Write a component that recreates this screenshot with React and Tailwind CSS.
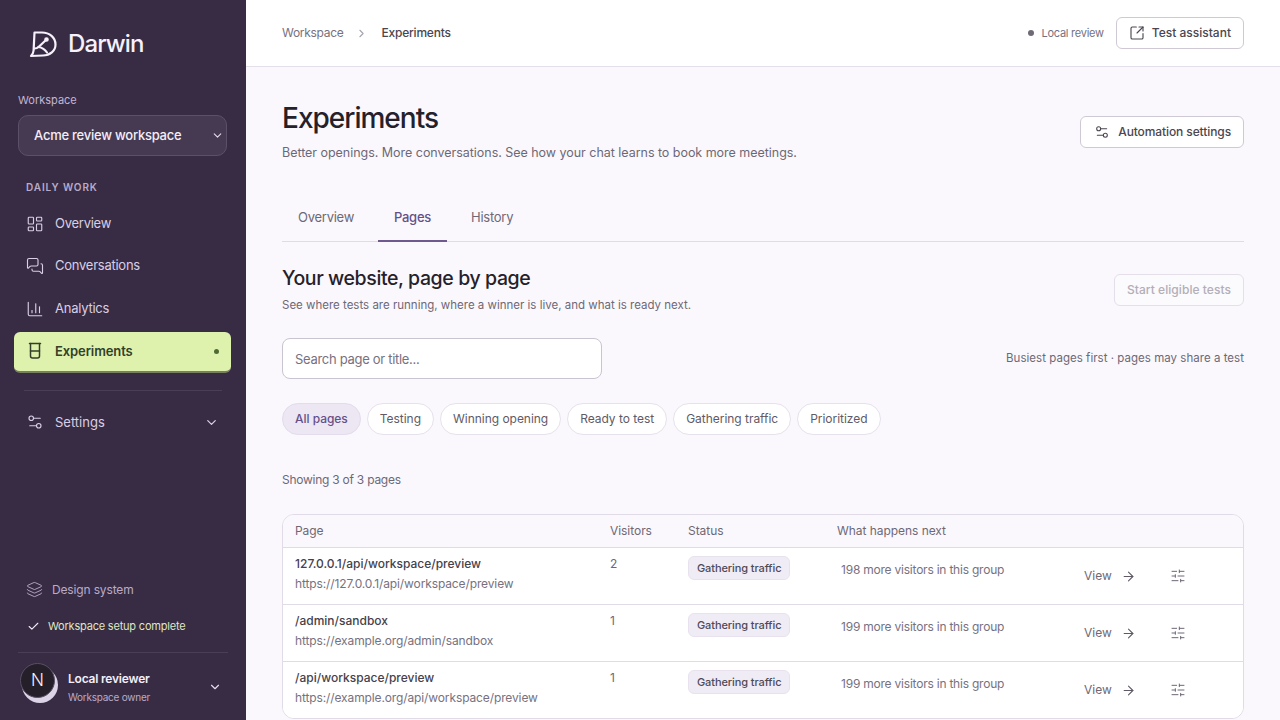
import React from "react";
import {
  ArrowRight,
  Check,
  ChevronDown,
  ChevronRight,
  ChartColumn,
  LayoutDashboard,
  Layers,
  MessagesSquare,
  Settings2,
  SlidersHorizontal,
  SquareArrowOutUpRight,
} from "lucide-react";

// Logo: speech bubble shaped like a D, with a little branch inside
const Logo = () => (
  <svg width="28" height="28" viewBox="0 0 28 28" fill="none" stroke="#f6f1fb" strokeWidth="2.2" strokeLinecap="round" strokeLinejoin="round">
    <path d="M2 26C3.6 24.5 4.4 22.5 4.6 20.5L5.5 2.5H13C20.5 2.5 26.5 7.5 26.5 14.5C26.5 21 21 25.5 14 25.5Z" />
    <path d="M5.5 18.5C7 18.5 8.5 18 9.5 17L17 10" />
    <path d="M9.5 17C12.5 17.5 16 19.5 18 22.5" />
    <circle cx="17.5" cy="9.5" r="1.2" fill="#f6f1fb" />
  </svg>
);

// Experiments icon: a glass half filled
const GlassIcon = () => (
  <svg width="18" height="18" viewBox="0 0 18 18" fill="none" stroke="#33402a" strokeWidth="1.5" strokeLinecap="round" strokeLinejoin="round">
    <path d="M3.5 1.5h11" />
    <path d="M4.5 1.5v12.5a2 2 0 0 0 2 2h5a2 2 0 0 0 2-2V1.5" />
    <path d="M4.5 9h9" />
  </svg>
);

const navItems = [
  { label: "Overview", icon: LayoutDashboard },
  { label: "Conversations", icon: MessagesSquare },
  { label: "Analytics", icon: ChartColumn },
];

const filters = ["Testing", "Winning opening", "Ready to test", "Gathering traffic", "Prioritized"];

const rows = [
  { title: "127.0.0.1/api/workspace/preview", url: "https://127.0.0.1/api/workspace/preview", visitors: 2, next: "198 more visitors in this group" },
  { title: "/admin/sandbox", url: "https://example.org/admin/sandbox", visitors: 1, next: "199 more visitors in this group" },
  { title: "/api/workspace/preview", url: "https://example.org/api/workspace/preview", visitors: 1, next: "199 more visitors in this group" },
];

const Sidebar = () => (
  <aside className="w-[246px] shrink-0 h-full bg-[#382c45] flex flex-col">
    <div className="flex items-center gap-[11px] pl-[29px] h-[87px]">
      <Logo />
      <span className="text-[24px] leading-[30px] font-medium tracking-[-0.9px] text-[#f6f1fb]">Darwin</span>
    </div>

    <div className="px-[18px] mt-[6px]">
      <p className="text-[11px] leading-[14px] text-[#c3b6d0]">Workspace</p>
      <button className="mt-[8px] w-[209px] h-[41px] pl-[15px] pr-[2px] flex items-center justify-between rounded-[10px] bg-[#463a53] border border-[#5c4f6a] text-[13px] tracking-[-0.24px] font-medium text-[#f3eef8]">
        Acme review workspace
        <ChevronDown size={13} className="text-[#e4dcec]" />
      </button>
    </div>

    <p className="mt-[24px] pl-[26px] text-[10px] leading-[14px] font-semibold tracking-[0.9px] text-[#b9abc8]">DAILY WORK</p>

    <nav className="mt-[8.4px] px-[14px] flex flex-col">
      {navItems.map((item) => (
        <a key={item.label} className="h-[42.5px] pl-[12px] flex items-center gap-[11px] text-[13px] tracking-[-0.25px] text-[#d9cfe4]">
          <item.icon size={18} strokeWidth={1.5} className="text-[#d9cfe4]" />
          {item.label}
        </a>
      ))}
      <a className="mt-[2.1px] h-[41px] w-[217px] pl-[12px] pr-[12px] flex items-center gap-[11px] rounded-[6px] bg-[#dff2ad] border-b-2 border-[#77805f] text-[13px] tracking-[-0.1px] font-semibold text-[#33402a]">
        <GlassIcon />
        Experiments
        <span className="ml-auto w-[5px] h-[5px] rounded-full bg-[#4f6b35]" />
      </a>
    </nav>

    <div className="mx-[24px] mt-[17px] h-px bg-[#4a3e57]" />

    <div className="mt-[11.5px] mx-[14px] h-[40px] pl-[12px] pr-[13px] flex items-center gap-[11px] text-[13px] text-[#d9cfe4]">
      <Settings2 size={18} strokeWidth={1.5} className="text-[#d9cfe4]" />
      Settings
      <ChevronDown size={15} className="ml-auto text-[#d9cfe4]" />
    </div>

    <div className="mt-auto">
      <div className="pl-[26px] flex items-center gap-[9px] text-[12px] tracking-[-0.15px] leading-[16px] text-[#b9abc8]">
        <Layers size={17} strokeWidth={1.3} />
        Design system
      </div>
      <div className="mt-[20px] pl-[27px] flex items-center gap-[8px] text-[11px] tracking-[-0.2px] leading-[16px] text-[#dfe6c0]">
        <Check size={13} className="text-[#f0edf4]" />
        Workspace setup complete
      </div>
      <div className="mx-[18px] mt-[18px] h-px bg-[#4a3e57]" />
      <div className="h-[67px] pl-[20px] pr-[24px] flex items-center">
        <div className="relative -mt-[7px] w-[38px] h-[40px] shrink-0">
          <div className="absolute left-[2px] top-[4px] w-[36px] h-[36px] rounded-full bg-[#dcd3e6]" />
          <div className="absolute left-0 top-0 w-[35px] h-[35px] rounded-full bg-[#241f29] border border-[#5a5065] flex items-center justify-center text-[17px] font-light text-[#f4f0f8]">N</div>
        </div>
        <div className="ml-[10px] pt-[1px]">
          <p className="text-[12px] leading-[16px] font-semibold tracking-[-0.2px] text-[#f3eef8]">Local reviewer</p>
          <p className="mt-[3px] text-[10px] leading-[14px] tracking-[-0.25px] text-[#b9abc8]">Workspace owner</p>
        </div>
        <ChevronDown size={14} className="ml-auto text-[#e4dcec]" />
      </div>
    </div>
  </aside>
);

const Topbar = () => (
  <header className="h-[67px] shrink-0 px-[36px] bg-white border-b border-[#e4dfe9] flex items-center">
    <span className="text-[12px] tracking-[-0.3px] text-[#77717f]">Workspace</span>
    <ChevronRight size={13} className="ml-[12px] mr-[13px] text-[#a8a3ae]" />
    <span className="text-[12px] tracking-[-0.2px] font-medium text-[#4a4650]">Experiments</span>
    <span className="ml-auto w-[6px] h-[6px] rounded-full bg-[#6f6a76]" />
    <span className="ml-[7px] text-[11px] tracking-[-0.25px] text-[#77717f]">Local review</span>
    <button className="ml-[12px] h-[32px] px-[12px] flex items-center gap-[7px] rounded-[6px] bg-white border border-[#cfc9d5] text-[12px] font-medium text-[#4a4650]">
      <SquareArrowOutUpRight size={16} strokeWidth={1.7} />
      Test assistant
    </button>
  </header>
);

const PagesTable = () => (
  <div className="mt-[26px] rounded-[12px] border border-[#e0dbe6] overflow-hidden">
    <div className="h-[33px] bg-[#faf8fd] border-b border-[#e0dbe6] grid grid-cols-[315px_78px_149px_1fr] items-center text-[12px] tracking-[-0.05px] text-[#6e6876]">
      <span className="px-[12px]">Page</span>
      <span className="px-[12px]">Visitors</span>
      <span className="px-[12px]">Status</span>
      <span className="px-[12px]">What happens next</span>
    </div>
    {rows.map((row, i) => (
      <div key={row.title} className={`h-[57px] last:h-[56px] bg-white grid grid-cols-[315px_78px_149px_247px_86px_1fr] ${i < rows.length - 1 ? "border-b border-[#e0dbe6]" : ""}`}>
        <div className="px-[12px] pt-[7px]">
          <p className="text-[12px] leading-[18px] font-medium text-[#45414c]">{row.title}</p>
          <p className="mt-[2px] text-[12px] leading-[18px] tracking-[-0.12px] text-[#77717f]">{row.url}</p>
        </div>
        <div className="px-[12px] pt-[7px] text-[12px] leading-[18px] text-[#6e6876]">{row.visitors}</div>
        <div className="px-[12px] pt-[6px]">
          <span className="inline-flex items-center h-[24px] px-[8px] rounded-[6px] bg-[#f0ecf5] border border-[#e7e2ed] text-[11px] tracking-[-0.1px] font-medium text-[#4f4a57]">Gathering traffic</span>
        </div>
        <div className="pl-[16px] pt-[13px] text-[12px] leading-[18px] tracking-[-0.22px] text-[#77717f]">{row.next}</div>
        <div className="pl-[12px] flex items-center gap-[9px] text-[12px] text-[#6e6876]">
          View
          <ArrowRight size={15} strokeWidth={1.7} className="text-[#5f5a66]" />
        </div>
        <div className="pl-[12px] flex items-center">
          <SlidersHorizontal size={16} strokeWidth={1.5} className="text-[#6e6876]" />
        </div>
      </div>
    ))}
  </div>
);

const App = () => (
  <div className="flex h-screen overflow-hidden bg-[#faf8fd] font-['Inter',sans-serif]">
    <Sidebar />
    <main className="flex-1 min-w-0 flex flex-col">
      <Topbar />
      <div className="px-[36px] pt-[34px]">
        <div className="flex items-start justify-between">
          <div>
            <h1 className="text-[28px] leading-[34px] font-medium tracking-[-1px] text-[#25212b]">Experiments</h1>
            <p className="mt-[9px] text-[12.5px] leading-[18px] tracking-[-0.03px] text-[#6e6876]">Better openings. More conversations. See how your chat learns to book more meetings.</p>
          </div>
          <button className="mt-[15px] h-[32px] pl-[13px] pr-[12px] flex items-center gap-[8px] rounded-[6px] bg-white border border-[#cfc9d5] text-[12px] tracking-[-0.1px] font-medium text-[#4a4650]">
            <Settings2 size={16} strokeWidth={1.6} />
            Automation settings
          </button>
        </div>

        <div className="mt-[36px] h-[44px] flex items-stretch border-b border-[#e0dbe6] text-[13px] tracking-[-0.25px] text-[#6e6876]">
          <a className="w-[96px] pl-[16px] pt-[10px]">Overview</a>
          <a className="w-[69px] -mb-px pt-[10px] text-center font-medium text-[#65508a] border-b-2 border-[#6f5a90]">Pages</a>
          <a className="pl-[24px] pt-[10px]">History</a>
        </div>

        <div className="mt-[23px] flex items-start justify-between">
          <div>
            <h2 className="text-[19.5px] leading-[26px] font-medium tracking-[-0.4px] text-[#25212b]">Your website, page by page</h2>
            <p className="mt-[6px] text-[11.5px] leading-[16px] text-[#6e6876]">See where tests are running, where a winner is live, and what is ready next.</p>
          </div>
          <button className="mt-[9px] h-[32px] px-[12px] rounded-[6px] bg-[#fbfafc] border border-[#e4dfe9] text-[12px] tracking-[0.05px] font-medium text-[#b3aeb8]">Start eligible tests</button>
        </div>

        <div className="mt-[25px] flex items-center justify-between">
          <input
            placeholder="Search page or title..."
            className="w-[320px] h-[41px] px-[12px] rounded-[8px] bg-white border border-[#c9c4cf] text-[13px] tracking-[-0.3px] outline-none placeholder:text-[#77717f]"
          />
          <span className="text-[11.5px] tracking-[0.03px] text-[#6e6876]">Busiest pages first · pages may share a test</span>
        </div>

        <div className="mt-[24px] flex items-center gap-[6px] text-[12px] tracking-[-0.03px]">
          <button className="h-[32px] px-[12px] rounded-full bg-[#ece7f3] border border-[#e2dcec] font-medium text-[#65508a]">All pages</button>
          {filters.map((f) => (
            <button key={f} className="h-[32px] px-[12px] rounded-full bg-white border border-[#e6e1eb] text-[#5f5a66]">{f}</button>
          ))}
        </div>

        <p className="mt-[37px] text-[12px] leading-[16px] tracking-[-0.25px] text-[#6e6876]">Showing 3 of 3 pages</p>

        <PagesTable />
      </div>
    </main>
  </div>
);

export default App;
